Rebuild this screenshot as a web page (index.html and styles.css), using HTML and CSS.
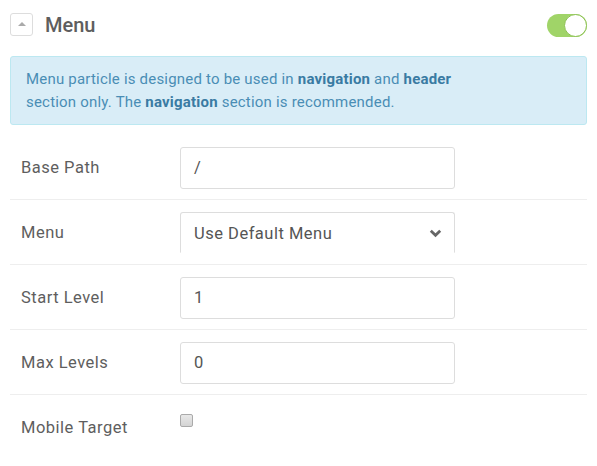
FILE: index.html
```html
<!DOCTYPE html>
<html>
<head>
<meta charset="utf-8">
<link rel="stylesheet" href="styles.css">
</head>
<body>
<div class="panel">
  <div class="header">
    <span class="collapse"><span class="tri"></span></span>
    <h2 class="title">Menu</h2>
    <span class="toggle"><span class="knob"></span></span>
  </div>
  <div class="alert">Menu particle is designed to be used in <b>navigation</b> and <b>header</b> section only. The <b>navigation</b> section is recommended.</div>
  <div class="row">
    <label class="label">Base Path</label>
    <div class="field"><div class="input">/</div></div>
  </div>
  <div class="row">
    <label class="label">Menu</label>
    <div class="field"><div class="input select">Use Default Menu
      <svg class="chev" width="13" height="9" viewBox="0 0 13 9"><path d="M1.8 1.8 L6.5 6.3 L11.2 1.8" fill="none" stroke="#666" stroke-width="2.8"/></svg>
    </div></div>
  </div>
  <div class="row">
    <label class="label">Start Level</label>
    <div class="field"><div class="input">1</div></div>
  </div>
  <div class="row">
    <label class="label">Max Levels</label>
    <div class="field"><div class="input">0</div></div>
  </div>
  <div class="row last">
    <label class="label">Mobile Target</label>
    <div class="field"><span class="check"></span></div>
  </div>
</div>
</body>
</html>
```
FILE: styles.css
```css
html, body { margin: 0; padding: 0; background: #fff; }
body { font-family: Roboto, "Open Sans", sans-serif; color: #555; }
.panel { padding: 0 10px; }
.header { height: 50px; display: flex; align-items: center; }
.collapse { width: 21px; height: 21px; border: 1px solid #ddd; border-radius: 3px; display: flex; align-items: center; justify-content: center; margin-top: -2px; }
.tri { width: 0; height: 0; border-left: 4px solid transparent; border-right: 4px solid transparent; border-bottom: 4px solid #aaa; margin-top: -1px; }
.title { margin: 0 0 0 12px; font-size: 20px; font-weight: 500; color: #5e5e5e; flex: 1; line-height: 24px; }
.toggle { width: 40px; height: 23px; border-radius: 12px; background: #a0d468; position: relative; }
.knob { position: absolute; right: 0; top: 0; width: 21px; height: 21px; border-radius: 50%; background: #fff; border: 1px solid #8cc152; }
.alert { margin-top: 6px; background: #d9edf7; border: 1px solid #bce8f1; border-radius: 3px; padding: 11px 110px 10px 15px; font-size: 15px; letter-spacing: 0.2px; line-height: 23px; color: #4a8db5; }
.alert b { color: #3a7ba3; font-weight: 700; }
.row { display: flex; padding: 12px 0 10px; border-bottom: 1px solid #eee; }
.alert + .row { margin-top: 10px; }
.row.last { border-bottom: none; }
.label { width: 159px; padding-left: 11px; font-size: 16.5px; letter-spacing: 0.5px; line-height: 42px; color: #5e5e5e; }
.field { width: 275px; }
.input { box-sizing: border-box; height: 42px; border: 1px solid #ddd; border-radius: 3px; padding: 0 13px; font-size: 16.5px; letter-spacing: 0.5px; line-height: 40px; color: #555; }
.select { height: 41px; border-bottom-color: transparent; border-radius: 3px 3px 0 0; display: flex; align-items: center; justify-content: space-between; line-height: 41px; padding-top: 1px; }
.chev { margin-right: -1px; }
.check { display: block; width: 11px; height: 11px; border: 1px solid #aaa; border-radius: 2px; background: linear-gradient(#e8e8e8, #d4d4d4); margin-top: 7px; }
```
